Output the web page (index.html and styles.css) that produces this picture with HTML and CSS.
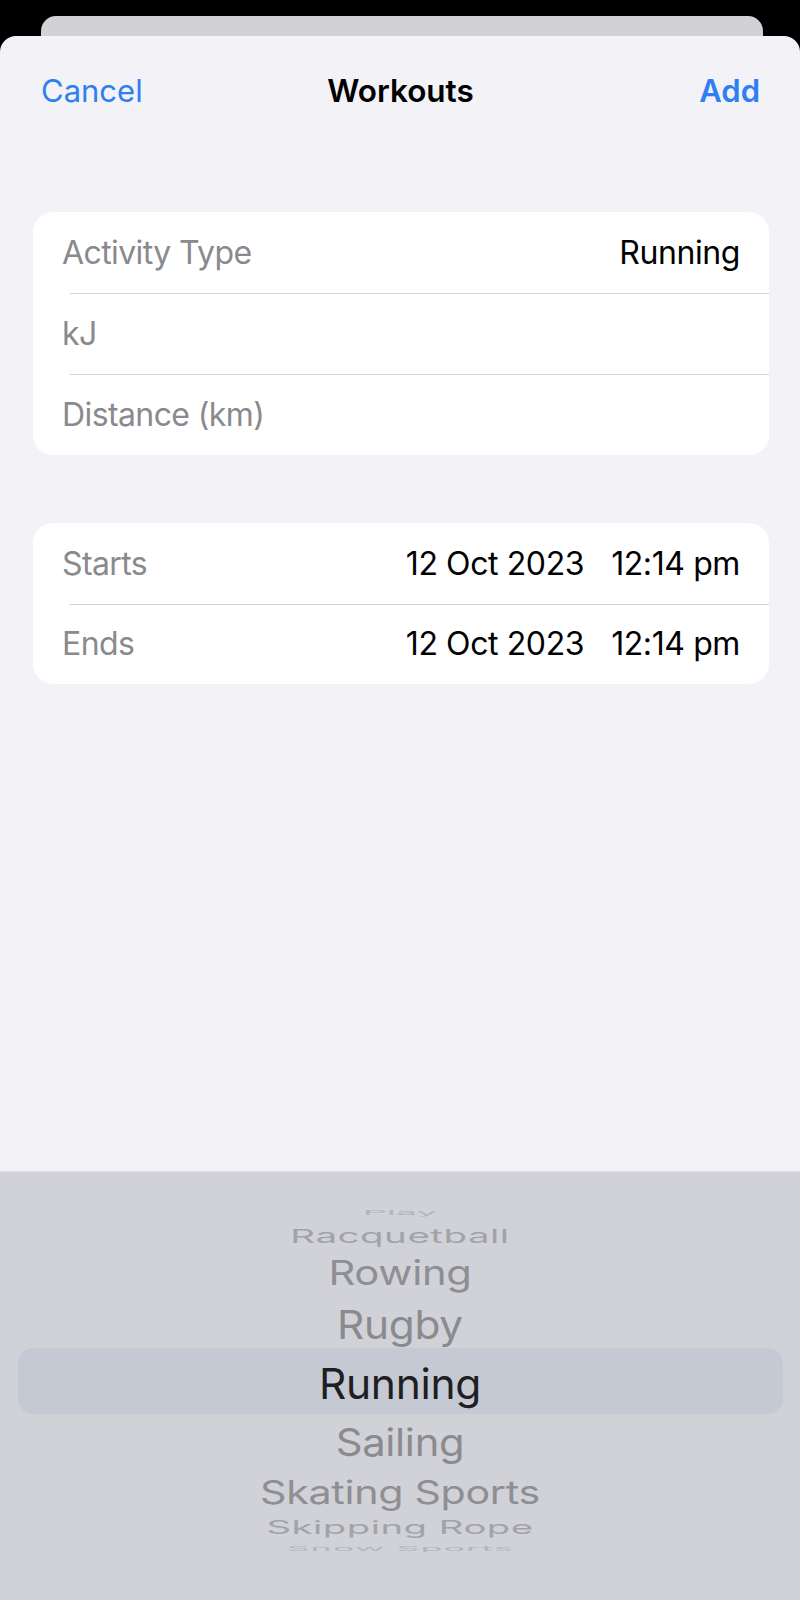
FILE: index.html
```html
<!DOCTYPE html>
<html lang="en">
<head>
<meta charset="utf-8">
<title>Workouts</title>
<link rel="stylesheet" href="styles.css">
</head>
<body>
<div class="screen">
  <div class="backcard"></div>
  <div class="sheet">
    <div class="nav">
      <span class="nav-btn cancel">Cancel</span>
      <span class="nav-title">Workouts</span>
      <span class="nav-btn add">Add</span>
    </div>

    <div class="group group-first">
      <div class="row">
        <span class="label">Activity Type</span>
        <span class="value">Running</span>
      </div>
      <div class="row">
        <span class="label">kJ</span>
      </div>
      <div class="row">
        <span class="label">Distance (km)</span>
      </div>
    </div>

    <div class="group group-second">
      <div class="row">
        <span class="label">Starts</span>
        <span class="value dates"><span>12 Oct 2023</span><span>12:14 pm</span></span>
      </div>
      <div class="row">
        <span class="label">Ends</span>
        <span class="value dates"><span>12 Oct 2023</span><span>12:14 pm</span></span>
      </div>
    </div>

    <div class="spacer"></div>

    <div class="picker">
      <div class="highlight"></div>
      <div class="wheel">
        <div class="item i-play"><span>Play</span></div>
        <div class="item i-racq"><span>Racquetball</span></div>
        <div class="item i-rowing"><span>Rowing</span></div>
        <div class="item i-rugby"><span>Rugby</span></div>
        <div class="item i-running"><span>Running</span></div>
        <div class="item i-sailing"><span>Sailing</span></div>
        <div class="item i-skating"><span>Skating Sports</span></div>
        <div class="item i-skipping"><span>Skipping Rope</span></div>
        <div class="item i-snow"><span>Snow Sports</span></div>
      </div>
    </div>
  </div>
</div>
</body>
</html>
```

FILE: styles.css
```css
* { box-sizing: border-box; }

html, body {
  margin: 0;
  padding: 0;
  background: #000;
}

body {
  font-family: Inter, "Liberation Sans", Arial, sans-serif;
  width: 800px;
  height: 1600px;
  overflow: hidden;
}

.screen {
  display: flex;
  flex-direction: column;
  height: 1600px;
  padding-top: 16px;
}

.backcard {
  height: 20px;
  margin: 0 37px 0 41px;
  background: #d1d1d6;
  border-radius: 15px 15px 0 0;
  flex: none;
}

.sheet {
  flex: 1;
  display: flex;
  flex-direction: column;
  background: #f2f2f7;
  border-radius: 16px 16px 0 0;
  overflow: hidden;
}

.nav {
  height: 108px;
  display: grid;
  grid-template-columns: 1fr auto 1fr;
  align-items: center;
  padding: 0 40px 0 41px;
  font-size: 31px;
  flex: none;
}

.nav-btn { color: #2f7ff0; }
.cancel { justify-self: start; font-weight: 400; }
.add { justify-self: end; font-weight: 600; }
.nav-title {
  font-weight: 600;
  font-size: 31.5px;
  color: #000;
}

.group {
  background: #fff;
  border-radius: 20px;
  margin: 0 31px 0 33px;
  flex: none;
}
.group-first { margin-top: 68px; }
.group-second { margin-top: 68px; }

.row {
  height: 81px;
  display: flex;
  align-items: center;
  justify-content: space-between;
  padding: 0 29px 0 29px;
  font-size: 32px;
  position: relative;
}
.group-second .row { height: 80.5px; }

.row + .row::before {
  content: "";
  position: absolute;
  top: 0;
  left: 37px;
  right: 0;
  height: 1px;
  background: #d4d4d8;
}

.label { color: #8a8a8e; letter-spacing: -0.6px; }
.value { color: #000; letter-spacing: -0.4px; }
.dates { display: flex; gap: 27px; }

.spacer { flex: 1; }

.picker {
  height: 429px;
  flex: none;
  background: #d1d2d7;
  border-top: 1px solid #dedee2;
  position: relative;
}

.highlight {
  position: absolute;
  left: 18px;
  right: 17px;
  top: 176px;
  height: 66px;
  border-radius: 15px;
  background: #c5c9d3;
}

.wheel {
  position: relative;
  display: flex;
  flex-direction: column;
  align-items: center;
  padding-top: 30px;
}

.item {
  display: flex;
  align-items: center;
  justify-content: center;
  width: 100%;
}
.item span {
  display: inline-block;
  font-size: 42px;
  letter-spacing: -0.3px;
  color: #8c8c91;
  white-space: nowrap;
}

.i-play { height: 20px; }
.i-play span { font-size: 38px; transform: scaleY(0.18); color: #b4b5ba; }

.i-racq { height: 28.5px; }
.i-racq span { font-size: 38.5px; transform: scaleY(0.5); color: #a2a3a8; letter-spacing: 0.5px; }

.i-rowing { height: 45px; }
.i-rowing span { font-size: 41.7px; transform: scaleY(0.82); color: #8e8e93; }

.i-rugby { height: 57px; }
.i-rugby span { font-size: 42.4px; transform: scaleY(0.93); color: #8a8a8f; }

.i-running { height: 61px; }
.i-running span { font-size: 42.5px; color: #1f1f22; }

.i-sailing { height: 56px; }
.i-sailing span { font-size: 41.7px; transform: scaleY(0.92); color: #8a8a8f; }

.i-skating { height: 44px; }
.i-skating span { font-size: 41.2px; transform: scaleY(0.78); color: #8e8e93; }

.i-skipping { height: 27px; }
.i-skipping span { font-size: 38.3px; transform: scaleY(0.48); color: #a2a3a8; letter-spacing: 0.5px; }

.i-snow { height: 17.5px; }
.i-snow span { font-size: 36px; transform: scaleY(0.18); color: #b4b5ba; letter-spacing: 1px; }
```
